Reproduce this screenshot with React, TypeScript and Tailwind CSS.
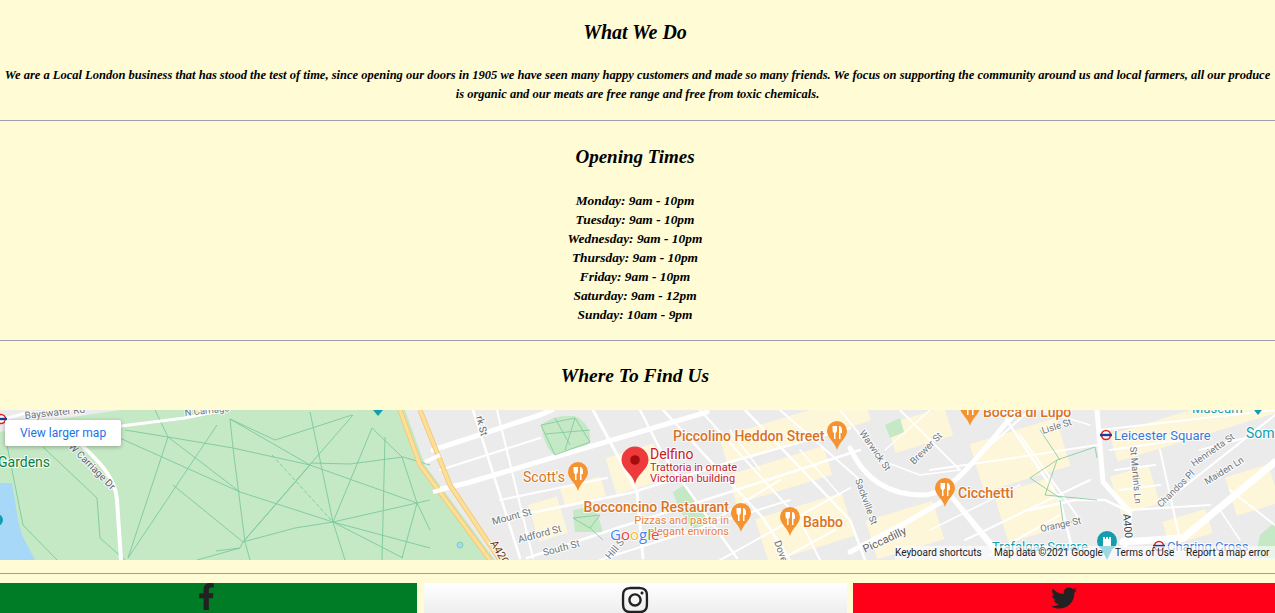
import React from "react";
import { FaFacebookF, FaInstagram, FaTwitter } from "react-icons/fa";

const serif = "font-['Liberation_Serif',serif] italic font-bold text-black";

const hours = [
  "Monday: 9am - 10pm",
  "Tuesday: 9am - 10pm",
  "Wednesday: 9am - 10pm",
  "Thursday: 9am - 10pm",
  "Friday: 9am - 10pm",
  "Saturday: 9am - 12pm",
  "Sunday: 10am - 9pm",
];

const parkPaths = [
  "M113,25 L240,82 L333,112 L430,138",
  "M128,148 L217,15",
  "M128,148 L168,27 L155,0",
  "M353,5 L243,132",
  "M173,75 L243,132",
  "M168,27 L240,82",
  "M230,9 L233,38 L245,132 L250,150",
  "M310,2 L333,112 L345,150",
  "M372,18 L333,112",
  "M243,132 L295,118 L333,112 L417,93 L430,90",
  "M125,20 L168,27 L233,38 L310,55 L417,93",
  "M310,53 L350,54 L403,47 L430,55",
  "M230,9 L310,55 L243,132",
  "M333,112 L403,148",
  "M385,27 L382,150",
  "M417,93 L402,148",
  "M240,138 L197,150",
  "M243,132 L240,138 L216,141",
  "M43,37 L97,88 L100,128 L125,150",
  "M7,35 L23,115 L57,150",
  "M230,9 L275,30 L352,5",
  "M372,18 L402,47 L417,93 L430,120",
];

const streets: [string, number][] = [
  ["M433,40 L540,5 L552,0", 5],
  ["M437,80 L467,73 L707,2", 5],
  ["M440,60 L540,28", 2],
  ["M473,0 L520,148", 2.5],
  ["M497,0 L533,148", 2],
  ["M593,0 L637,82 L643,148", 3],
  ["M640,0 L663,45 L737,148", 2.5],
  ["M500,90 L607,68", 2],
  ["M520,105 L630,83 L730,52 L850,18", 2.5],
  ["M527,148 L617,118 L730,82 L860,40", 2.5],
  ["M600,150 L700,118 L790,90", 2],
  ["M663,0 L763,108 L790,150", 2.5],
  ["M700,0 L800,110 L820,150", 2],
  ["M745,0 L850,110 L865,150", 2.5],
  ["M780,0 L860,70", 2],
  ["M690,125 L780,70", 2],
  ["M720,150 L850,78", 2],
  ["M780,150 L835,120", 2],
  ["M760,60 L730,20", 1.5],
  ["M800,40 L840,85", 1.5],
  ["M840,0 L880,50", 2],
  ["M850,38 C860,60 880,85 923,85 C950,85 975,50 1007,12 L1020,-2", 5],
  ["M850,142 L907,112 L950,87", 5],
  ["M950,85 L1005,150", 5],
  ["M885,40 L930,0", 1.5],
  ["M900,0 L960,60", 2],
  ["M880,50 L920,65 L960,60", 1.5],
  ["M930,60 L1000,50 L1097,35", 2],
  ["M1000,0 L1060,90 L1075,150", 2.5],
  ["M1020,25 L1080,110", 2],
  ["M985,40 L1030,0", 2],
  ["M965,130 L1090,70", 2],
  ["M990,145 L1060,105", 2],
  ["M930,120 L1020,75", 1.5],
  ["M960,100 L1000,150", 1.5],
  ["M1030,100 L1075,90 L1105,90 L1130,102", 2.5],
  ["M1040,0 L1090,15", 1.5],
  ["M1097,0 L1103,72 L1130,102 L1125,135", 5],
  ["M1123,132 L1183,128 L1275,52", 7],
  ["M1100,20 L1275,0", 2],
  ["M1110,40 L1180,30", 2],
  ["M1115,60 L1155,55", 2],
  ["M1120,80 L1160,75", 2],
  ["M1130,100 L1210,95", 2],
  ["M1160,40 L1180,130", 2],
  ["M1180,80 L1275,5", 2],
  ["M1200,40 L1275,20", 2],
  ["M1220,100 L1240,130", 1.5],
  ["M1230,80 L1275,115", 2],
];

const yellow: [number, number, number, number][] = [
  [533, 90, 30, 38],
  [562, 72, 42, 20],
  [610, 40, 50, 38],
  [720, 5, 150, 28],
  [730, 50, 100, 30],
  [760, 95, 90, 45],
  [870, 100, 70, 40],
  [890, 5, 60, 30],
  [975, 20, 90, 50],
  [1000, 75, 60, 50],
  [1110, 0, 165, 28],
  [1115, 60, 40, 40],
  [1165, 105, 45, 25],
  [1230, 60, 45, 40],
];

const Pin = ({ x, y }: { x: number; y: number }) => (
  <g transform={`translate(${x},${y})`}>
    <path d="M0,0 C-2,-8 -10,-12 -10,-19 A10,10 0 1 1 10,-19 C10,-12 2,-8 0,0Z" fill="#f59331" />
    <path d="M-4.5,-24 V-20 Q-4.5,-17.5 -3,-17 V-11 H-1.5 V-17 Q0,-17.5 0,-20 V-24 Z" fill="#fff" />
    <path d="M2,-11 V-24 Q5,-24 5,-19 V-17 H3.5 V-11 Z" fill="#fff" />
  </g>
);

const Tube = ({ x, y }: { x: number; y: number }) => (
  <g transform={`translate(${x},${y})`}>
    <circle r="4.5" fill="#fff" stroke="#e1251b" strokeWidth="1.6" />
    <rect x="-6" y="-1.2" width="12" height="2.4" fill="#1c3f94" />
  </g>
);

const Label = ({
  x,
  y,
  size,
  fill,
  weight = 400,
  anchor = "start",
  rotate,
  children,
}: {
  x: number;
  y: number;
  size: number;
  fill: string;
  weight?: number;
  anchor?: "start" | "end" | "middle";
  rotate?: number;
  children: React.ReactNode;
}) => (
  <text
    x={x}
    y={y}
    fontSize={size}
    fill={fill}
    fontWeight={weight}
    textAnchor={anchor}
    fontFamily="Roboto, sans-serif"
    stroke="#ffffff"
    strokeWidth="2"
    strokeOpacity="0.85"
    paintOrder="stroke"
    transform={rotate !== undefined ? `rotate(${rotate} ${x} ${y})` : undefined}
  >
    {children}
  </text>
);

const MapArt = () => (
  <svg viewBox="0 0 1275 150" className="block h-full w-full">
    <rect width="1275" height="150" fill="#ebebeb" />
    {yellow.map(([x, y, w, h], i) => (
      <rect
        key={i}
        x={x}
        y={y}
        width={w}
        height={h}
        fill="#fef6d8"
        transform={`rotate(-17 ${x + w / 2} ${y + h / 2})`}
      />
    ))}
    <path d="M0,0 H405 L425,55 L495,150 H0Z" fill="#c5e8c5" />
    <path d="M0,0 H120 L40,12 L0,22Z" fill="#ebebeb" />
    <path d="M0,73 H12 L18,110 L22,125 L35,150 H0Z" fill="#a8d8f8" />
    <g fill="none" stroke="#7cc99b" strokeWidth="0.9">
      {parkPaths.map((d, i) => (
        <path key={i} d={d} />
      ))}
      <path d="M272,45 L333,112" strokeDasharray="4 2" />
    </g>
    <g fill="#c5e8c5" stroke="none">
      <path d="M541,15 Q555,4 575,6 Q592,15 590,32 Q580,45 555,45 Q545,40 541,15Z" />
      <path d="M573,100 L595,96 L603,122 L575,122Z" />
      <path d="M673,82 L684,75 L712,108 L696,122 Q680,105 673,82Z" />
      <path d="M885,15 L900,8 L904,22 L890,28Z" />
      <path d="M1260,125 L1275,112 V148 H1255Z" />
    </g>
    <g fill="none" stroke="#ffffff" strokeLinecap="round" strokeLinejoin="round">
      {streets.map(([d, w], i) => (
        <path key={i} d={d} strokeWidth={w} />
      ))}
      <path d="M121,16 L185,8 L233,-2" strokeWidth="3" />
      <path d="M66,20 C85,40 115,60 117,90 L121,150" strokeWidth="4" />
      <path d="M30,2 L0,10" strokeWidth="3" />
    </g>
    <g fill="none" stroke="#7cc99b" strokeWidth="0.8">
      <path d="M541,15 L575,8 L590,32 L555,45Z M555,8 L570,35 M575,8 L565,40 M545,24 L590,20" />
      <path d="M573,108 L600,105 L590,118 Z M590,118 L603,130" />
      <path d="M1030,68 L1057,50 L1095,37 L1097,48 M1057,50 L1045,85 L1097,90 M1030,68 L1060,88 M1040,20 L1060,50 M1060,90 L1063,112 L1075,112" />
    </g>
    <g fill="none" strokeLinejoin="round">
      <path d="M400,0 L420,55 L490,150" stroke="#f4c571" strokeWidth="5" />
      <path d="M400,0 L420,55 L490,150" stroke="#fddf98" strokeWidth="3.4" />
      <path d="M420,0 L430,25 L450,75 L500,150" stroke="#f4c571" strokeWidth="5" />
      <path d="M420,0 L430,25 L450,75 L500,150" stroke="#fddf98" strokeWidth="3.4" />
      <path d="M425,52 L440,45" stroke="#ffffff" strokeWidth="4" />
      <path d="M433,82 L445,79" stroke="#ffffff" strokeWidth="4" />
    </g>
    <circle cx="460" cy="135" r="3" fill="#a8d8f8" stroke="#7cc99b" strokeWidth="0.8" />

    <Label x={25} y={9} size={10} fill="#70757a" rotate={-6}>Bayswater Rd</Label>
    <Label x={185} y={6} size={9.5} fill="#70757a" rotate={-6}>N Carriage</Label>
    <Label x={-2} y={57} size={14} fill="#0a8043">Gardens</Label>
    <Label x={68} y={37} size={10} fill="#5f6368" rotate={45}>W Carriage Dr</Label>
    <Label x={476} y={7} size={10} fill="#5f6368" rotate={75}>rk St</Label>
    <Label x={493} y={115} size={10} fill="#70757a" rotate={-15}>Mount St</Label>
    <Label x={519} y={133} size={10} fill="#70757a" rotate={-15}>Aldford St</Label>
    <Label x={544} y={146} size={10} fill="#70757a" rotate={-15}>South St</Label>
    <Label x={610} y={150} size={10} fill="#70757a" rotate={-50}>Hill St</Label>
    <Label x={490} y={133} size={11} fill="#6b3a0a" rotate={60}>A4202</Label>
    <Label x={774} y={132} size={10} fill="#70757a" rotate={70}>Dover</Label>
    <Label x={859} y={23} size={9.5} fill="#70757a" rotate={55}>Warwick St</Label>
    <Label x={914} y={55} size={9.5} fill="#70757a" rotate={-45}>Brewer St</Label>
    <Label x={855} y={70} size={9.5} fill="#70757a" rotate={70}>Sackville St</Label>
    <Label x={865} y={143} size={11} fill="#5f6368" rotate={-25}>Piccadilly</Label>
    <Label x={1043} y={24} size={9.5} fill="#70757a" rotate={-18}>Lisle St</Label>
    <Label x={1041} y={122} size={9.5} fill="#70757a" rotate={-12}>Orange St</Label>
    <Label x={1130} y={37} size={9.5} fill="#70757a" rotate={85}>St Martin's Ln</Label>
    <Label x={1161} y={98} size={9.5} fill="#70757a" rotate={-45}>Chandos Pl</Label>
    <Label x={1194} y={57} size={9.5} fill="#70757a" rotate={-35}>Henrietta St</Label>
    <Label x={1207} y={75} size={9.5} fill="#70757a" rotate={-32}>Maiden Ln</Label>
    <Label x={1123} y={104} size={10.5} fill="#3c4043" rotate={85}>A400</Label>

    <Label x={673} y={31} size={14} fill="#d9731f" weight={500}>Piccolino Heddon Street</Label>
    <Label x={523} y={72} size={14} fill="#d9731f">Scott's</Label>
    <Label x={729} y={102} size={14} fill="#d9731f" weight={500} anchor="end">Bocconcino Restaurant</Label>
    <Label x={729} y={114} size={11} fill="#e8833a" anchor="end">Pizzas and pasta in</Label>
    <Label x={729} y={125} size={11} fill="#e8833a" anchor="end">elegant environs</Label>
    <Label x={803} y={117} size={14} fill="#d9731f" weight={500}>Babbo</Label>
    <Label x={958} y={88} size={14} fill="#d9731f" weight={500}>Cicchetti</Label>
    <Label x={983} y={7} size={14} fill="#d9731f" weight={500}>Bocca di Lupo</Label>
    <Label x={650} y={49} size={14} fill="#c5221f">Delfino</Label>
    <Label x={650} y={61} size={11} fill="#c5221f">Trattoria in ornate</Label>
    <Label x={650} y={72} size={11} fill="#c5221f">Victorian building</Label>
    <Label x={1114} y={30} size={13} fill="#3b78d8">Leicester Square</Label>
    <Label x={1246} y={28} size={14} fill="#129eaf">Som</Label>
    <Label x={1192} y={3} size={13} fill="#129eaf">Museum</Label>
    <Label x={992} y={141} size={13} fill="#129eaf">Trafalgar Square</Label>
    <Label x={1167} y={141} size={13} fill="#3b78d8">Charing Cross</Label>

    <Pin x={837} y={40} />
    <Pin x={578} y={81} />
    <Pin x={741} y={122} />
    <Pin x={790} y={126} />
    <Pin x={945} y={97} />
    <Pin x={970} y={16} />
    <g transform="translate(635,74)">
      <path d="M0,0 C-2,-10 -13.5,-15 -13.5,-24 A13.5,13.5 0 1 1 13.5,-24 C13.5,-15 2,-10 0,0Z" fill="#ee3a3a" />
      <circle cy="-24" r="4.8" fill="#a50e0e" />
    </g>
    <Tube x={1106} y={25} />
    <Tube x={1159} y={136} />
    <Tube x={1} y={9} />
    <path d="M373,0 H383 L378,6Z" fill="#129eaf" />
    <path d="M1254,0 H1262 L1258,5Z" fill="#129eaf" />
    <circle cx="-3" cy="110" r="6" fill="#129eaf" />
    <g transform="translate(1107,131)">
      <circle r="10" fill="#129eaf" />
      <path d="M-4,5 V-4 H-2 V-2 H-1 V-4 H1 V-2 H2 V-4 H4 V5Z" fill="#fff" />
      <path d="M-5,9 L0,19 L5,9Z" fill="#129eaf" />
    </g>
    <text x="610" y="130" fontSize="15" fontWeight="500" fontFamily="'Open Sans', sans-serif" stroke="#ffffff" strokeWidth="1.5" paintOrder="stroke">
      <tspan fill="#4285f4">G</tspan>
      <tspan fill="#ea4335">o</tspan>
      <tspan fill="#fbbc05">o</tspan>
      <tspan fill="#4285f4">g</tspan>
      <tspan fill="#34a853">l</tspan>
      <tspan fill="#ea4335">e</tspan>
    </text>
  </svg>
);

export default function App() {
  return (
    <div className="h-[613px] overflow-hidden bg-[#fffbd5] text-center">
      <section className="pt-[19px]">
        <h2 className={`${serif} pr-[5px] text-[20px] leading-[26px]`}>What We Do</h2>
        <p className={`${serif} mt-[21px] text-[12.5px] leading-[19px]`}>
          We are a Local London business that has stood the test of time, since opening our doors in 1905 we have seen many happy customers and made so many friends. We focus on supporting the community around us and local farmers, all our produce is organic and our meats are free range and free from toxic chemicals.
        </p>
      </section>
      <hr className="mt-[16px] border-t border-[#9c9eaa]" />
      <section className="pt-[23px]">
        <h2 className={`${serif} pr-[5px] text-[19px] leading-[26px]`}>Opening Times</h2>
        <div className={`${serif} mt-[21px] pr-[5px] text-[13.4px] leading-[19px]`}>
          {hours.map((h) => (
            <div key={h}>{h}</div>
          ))}
        </div>
      </section>
      <hr className="mt-[16px] border-t border-[#9c9eaa]" />
      <section className="pt-[22px]">
        <h2 className={`${serif} pr-[5px] text-[19.5px] leading-[26px]`}>Where To Find Us</h2>
      </section>
      <div className="relative mt-[21px] h-[150px] overflow-hidden">
        <MapArt />
        <a className="absolute left-[5px] top-[10px] flex h-[26px] w-[116px] items-center justify-center rounded-[2px] bg-white font-['Roboto',sans-serif] text-[12px] text-[#1a73e8] shadow-[0_1px_4px_rgba(0,0,0,0.3)]">
          View larger map
        </a>
        <div className="absolute bottom-0 right-0 flex h-[14px] w-[380px] items-center bg-white/60 font-['Roboto',sans-serif] text-[10px] leading-[14px] text-[#222]">
          <span className="w-[99px] text-left">Keyboard shortcuts</span>
          <span className="w-[121px] text-left">Map data ©2021 Google</span>
          <span className="w-[71px] text-left">Terms of Use</span>
          <span className="text-left">Report a map error</span>
        </div>
      </div>
      <hr className="mt-[13px] border-t border-[#9c9eaa]" />
      <div className="mt-[9px] flex h-[30px] justify-between overflow-hidden">
        <a className="flex w-[417px] justify-center bg-[#017c26] pr-[5px] text-[#222]">
          <FaFacebookF className="text-[27px]" />
        </a>
        <a className="flex w-[423px] justify-center bg-gradient-to-b from-white to-[#eeeeee] pt-[2px] text-[#222]">
          <FaInstagram className="text-[30px]" />
        </a>
        <a className="flex w-[422px] justify-center bg-[#ff0018] pt-[2px] text-[#222]">
          <FaTwitter className="text-[26px]" />
        </a>
      </div>
    </div>
  );
}
